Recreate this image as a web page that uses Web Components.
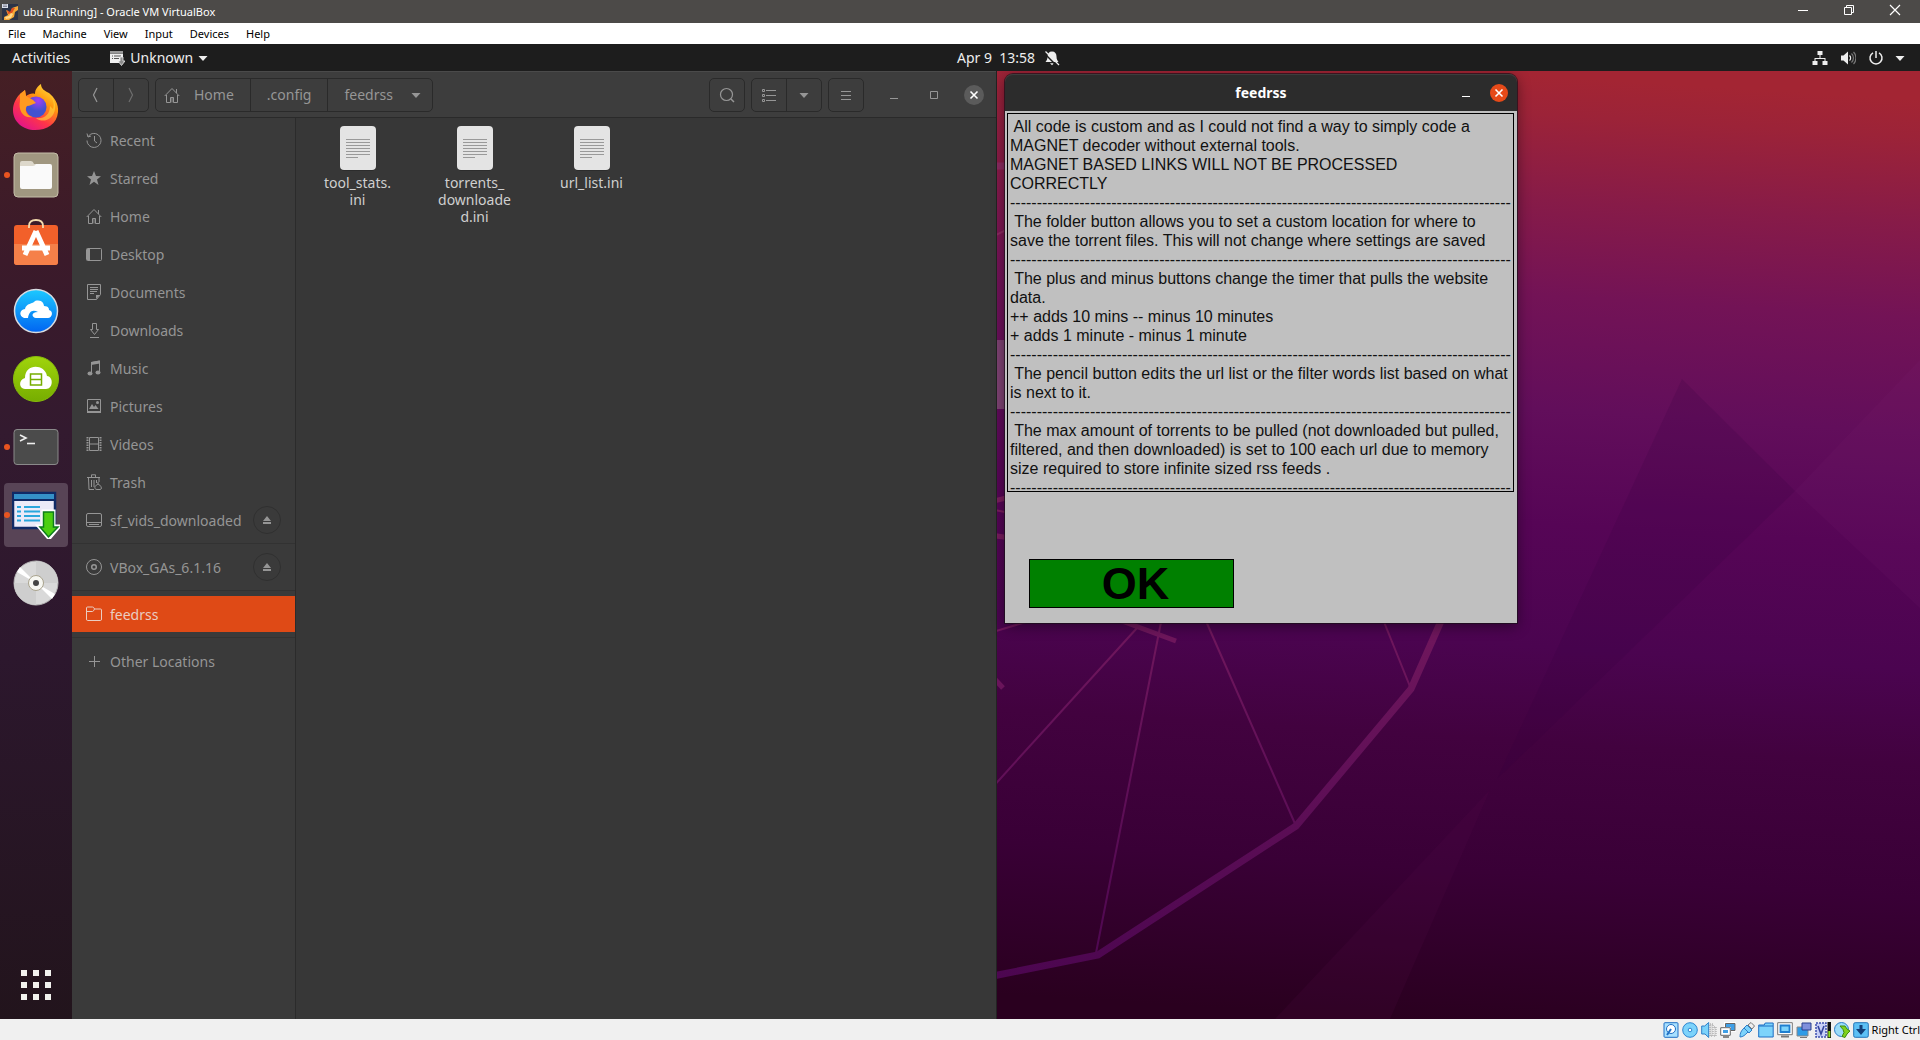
<!DOCTYPE html>
<html lang="en">
<head>
<meta charset="utf-8">
<title>ubu [Running] - Oracle VM VirtualBox</title>
<style>
html, body { height: 100%; margin: 0; }
body { display: flex; flex-direction: column; overflow: hidden; background: #1d1d1d; font-family: "Noto Sans", sans-serif; font-size: 14px; }
main { flex: 1; min-height: 0; display: flex; }
</style>
</head>
<body>
<vm-titlebar>ubu [Running] - Oracle VM VirtualBox</vm-titlebar>
<vm-menubar></vm-menubar>
<shell-panel></shell-panel>
<main>
  <shell-dock></shell-dock>
  <desk-top>
    <files-window></files-window>
    <dialog-window heading="feedrss"><feed-help></feed-help></dialog-window>
  </desk-top>
</main>
<vm-statusbar></vm-statusbar>

<script>
const ICONS = {
  vbox: '<rect width="16" height="16" fill="#2b3448"/><path d="M4 6l5 3 1-5 6-2v4l-3 2-1 5-5 3H2v-3l4-2z" fill="#f5a836"/><path d="M5 6l3 2 2-4h3l-3 5-4 1z" fill="#e3501f"/><path d="M3 13l4-1 2-3 2 1-2 4-5 1z" fill="#ffd98a"/><rect width="6" height="4" fill="#d9dee8"/><path d="M1 1h4M1 2.500h4" stroke="#667" stroke-width=".7"/>',
  winmin: '<path d="M3 8.500h10" stroke="#fff"/>',
  winmax: '<path d="M3.500 5.500h7v7h-7zM5.500 5.500v-2h7v7h-2" fill="none" stroke="#fff"/>',
  winclose: '<path d="M3 3l10 10M13 3L3 13" stroke="#fff" stroke-width="1.200"/>',
  app: '<path d="M1 1h13v2H1z" fill="#999"/><path d="M1 3.500h13V8h-1.500v3H10v2H1z" fill="#eee"/><path d="M3 6h1m1 0h7M3 8.500h1m1 0h5" stroke="#555"/><path d="M11 7h3v4h2l-3.500 4.500L9 11h2z" fill="#8a8a8a" stroke="#eee" stroke-width=".8"/>',
  down: '<path d="M3.500 6h9L8 11z" fill="currentColor"/>',
  bell: '<path d="M8 1.500c3 0 4.500 2 4.500 5 0 3 1 4 2 5.500H1.500c1-1.500 2-2.500 2-5.500 0-3 1.500-5 4.500-5zM6 13.300h4L8 15.300z" fill="#eee"/><path d="M0 3l13 13" stroke="#1d1d1d" stroke-width="1.500"/><path d="M1.500 1.500l13.500 13.500" stroke="#eee" stroke-width="1.200"/>',
  net: '<path d="M5.500 1h5v4h-2v3h5v3h2v4h-5v-4h2V9h-9v2h2v4h-5v-4h2V8h5V5h-2z" fill="#eee"/>',
  vol: '<path d="M1 5.500h2.500L8 1.500v13l-4.500-4H1z" fill="#eee"/><path d="M9.500 5.500c1.500 1.300 1.500 3.700 0 5" fill="none" stroke="#eee" stroke-width="1.200"/><path d="M11.500 3.500c2.600 2.500 2.600 6.500 0 9M13.500 2c3.200 3 3.200 9 0 12" fill="none" stroke="#777" stroke-width="1.200"/>',
  power: '<path d="M5 2.800a6 6 0 1 0 6 0M8 1v7" fill="none" stroke="#eee" stroke-width="1.500"/>',
  back: '<path d="M9 1L5.500 8 9 15" fill="none" stroke="currentColor" stroke-width="1.200"/>',
  fwd: '<path d="M6 1l3.500 7L6 15" fill="none" stroke="currentColor" stroke-width="1.200"/>',
  home: '<path d="M.7 9L8 1.500 15.300 9M2.500 8v7.500h4v-5h3v5h4V8M12.500 2v4" fill="none" stroke="currentColor"/><path d="M7 10h2.500v5.500H7z" fill="currentColor" opacity=".45"/>',
  recent: '<path d="M2.200 4.500A7 7 0 1 1 1 8.500M8.500 4v5l2.500 2M1 1.500l1 3.500 3-1" fill="none" stroke="currentColor"/>',
  star: '<path d="M8 1l2 5 5 .2-4 3.400L12.500 15 8 11.800 3.500 15 5 9.600 1 6.200 6 6z" fill="currentColor"/>',
  desktop: '<rect x=".5" y="2.500" width="15" height="12" rx="1" fill="none" stroke="currentColor"/><path d="M1 3h3v11H1z" fill="currentColor"/>',
  doc: '<path d="M1.500.5h13v10l-4 5h-9zM4 3.500h8M4 5.500h8M4 7.500h7M4 9.500h4" fill="none" stroke="currentColor"/><path d="M10 11h4l-4 4z" fill="currentColor"/>',
  download: '<path d="M6.500 1.500h4v6h2l-4 5-4-5h2zM4 15.500h9" fill="none" stroke="currentColor"/>',
  music: '<path d="M5.500 13V2.500l8-1.500v11" fill="none" stroke="currentColor"/><path d="M5 2l9-1.500v3L5 5z" fill="currentColor"/><ellipse cx="4" cy="13.500" rx="2.500" ry="2" fill="currentColor"/><ellipse cx="12" cy="12.500" rx="2.500" ry="2" fill="currentColor"/>',
  picture: '<path d="M1.500 1.500h13v13h-13z" fill="none" stroke="currentColor"/><path d="M1 13h14v2H1zM3 11l3-5 2 3 1.500-2 3 4z" fill="currentColor"/><circle cx="11.500" cy="4.500" r="1.500" fill="currentColor"/>',
  video: '<path d="M3.500 1.500h9v13h-9zM3.500 8h9" fill="none" stroke="currentColor"/><path d="M1.500 1v14M14.500 1v14" stroke="currentColor" stroke-width="2" stroke-dasharray="1.500 1"/>',
  trash: '<path d="M1 3.500h13M5.500 3V.8h4V3M2.500 4l.5 11.500h5M5.500 6v7M8 6v7M10.500 6v3M13 4v4" fill="none" stroke="currentColor"/><path d="M12 8v2m0 0c-4 2-4 5.500-1 5.500h3c2.500 0 1.500-4-2-5.500z" fill="none" stroke="currentColor"/>',
  drive: '<rect x=".5" y="1.500" width="15" height="13" rx="1.500" fill="none" stroke="currentColor"/><path d="M1 10.500h14M3 12.500h10" stroke="currentColor"/>',
  disc: '<circle cx="8" cy="8" r="7.500" fill="none" stroke="currentColor"/><circle cx="8" cy="8" r="2.300" fill="none" stroke="currentColor" stroke-width="1.500"/>',
  folder: '<path d="M.5 13V2q0-1 1-1h5q1 0 1.500 1l.5 1h6q1 0 1 1v9q0 1.500-1 1.500h-13q-1 0-1-1.500zM.5 5.500h6q1 0 2-2.500" fill="none" stroke="currentColor"/>',
  plus: '<path d="M8.500 3v11M3 8.500h11" stroke="currentColor"/>',
  eject: '<path d="M8 4l4 5H4zM4 10h8v2H4z" fill="currentColor"/>',
  search: '<circle cx="7.500" cy="7.500" r="6" fill="none" stroke="currentColor" stroke-width="1.200"/><path d="M12 12l3 3" stroke="currentColor" stroke-width="1.500"/>',
  list: '<path d="M5 3.500h10M5 8.500h10M5 13.500h10" stroke="currentColor"/><path d="M1.500 2.500h2v2h-2zM1.500 7.500h2v2h-2zM1.500 12.500h2v2h-2z" fill="none" stroke="currentColor"/>',
  burger: '<path d="M3 4.500h10M3 8.500h10M3 12.500h10" stroke="currentColor"/>',
  min: '<path d="M4 11.500h8" stroke="currentColor"/>',
  max: '<path d="M4.500 4.500h7v7h-7z" fill="none" stroke="currentColor"/>',
  close: '<path d="M4.500 4.500l7 7M11.500 4.500l-7 7" stroke="currentColor" stroke-width="1.600"/>',
  hdd: '<rect x="1" y=".7" width="14" height="14.600" rx="1" fill="#a8e0ff" stroke="#1f6fc4"/><circle cx="8" cy="7" r="4.500" fill="#fff" stroke="#1f6fc4"/><path d="M8 7l-4 6" stroke="#1f6fc4" stroke-width="2"/>',
  cd: '<circle cx="8" cy="8" r="7.300" fill="#7cd3fb" stroke="#2d86d0"/><circle cx="8" cy="8" r="1.800" fill="#fff" stroke="#2d86d0"/>',
  audio: '<path d="M.7 4h3l4-3.500v15L4 12H.7z" fill="#7cd3fb" stroke="#2d7ec8"/><path d="M9 2h3v12H9zM13 5h2v9h-2" fill="#ddd" stroke="#999" stroke-dasharray="1 1"/>',
  lan: '<path d="M5.500 1.500h9.500v7H5.500z" fill="#3f9fe6" stroke="#fff" stroke-width="3"/><path d="M5.500 1.500h9.500v7H5.500z" fill="#3f9fe6" stroke="#666"/><path d="M1.500 6.500h8v6h-8z" fill="#3f9fe6" stroke="#fff" stroke-width="3"/><path d="M.7 5.700h9.600v7.600H.7z" fill="none" stroke="#666"/><path d="M3 15h6" stroke="#666" stroke-width="1.500"/>',
  usb: '<path d="M1 15c0-4 1-6 4-9l4 4c-3 3-5 5-8 5z" fill="#7cd3fb" stroke="#2d7ec8"/><path d="M5 6l3-3 5 5-3 3z" fill="#7cd3fb" stroke="#2d7ec8"/><path d="M9 3l3-2.500 3.500 3.500L13 7z" fill="#eee" stroke="#777"/>',
  share: '<path d="M.7 3h5.500l1-2h8v14H.7z" fill="#7cd3fb" stroke="#1f6fc4"/><path d="M1 4h14" stroke="#1f6fc4"/>',
  display: '<path d="M.7.7h14.600v12H.7z" fill="#fff" stroke="#777"/><path d="M3.500 3.500h9v6.500h-9z" fill="#7cd3fb" stroke="#1f7fd0" stroke-width="1.800"/><path d="M4 14.500h8" stroke="#777" stroke-width="2"/>',
  rec: '<path d="M1 5h11v9H1z" fill="#2d9be6" stroke="#888"/><path d="M6 1h9v7H6z" fill="#7f90dc" stroke="#2a418f"/><path d="M4 15.500h7" stroke="#777"/>',
  cpu: '<rect x="1" y="1" width="10" height="14" fill="#c8d0f6" stroke="#3e4fae" stroke-width="1.500" stroke-dasharray="2 1"/><path d="M3 4l3 8 3-8" fill="none" stroke="#33449c" stroke-width="1.600"/><path d="M12.500 0h3.500v16h-3.500z" fill="#111"/><path d="M13.300 9h2v6.300h-2z" fill="#8be01c"/>',
  mouse: '<circle cx="7.500" cy="7.500" r="7" fill="#9adcf8" stroke="#2d7ec8"/><path d="M6 4h5l2 3 3 2-3 3-2 3.500-3-1 2-4-1-3z" fill="#7fd11c" stroke="#3c8a10"/>',
  key: '<rect x=".7" y=".7" width="14.600" height="14.600" rx="1.500" fill="#5cc0f5" stroke="#2274b8"/><path d="M6.500 3h3v4H13l-5 6-5-6h3.500z" fill="#123f78"/>',
  textfile: '<rect x="0" y=".5" width="36" height="44" rx="4" fill="#222"/><rect width="36" height="44" rx="4" fill="#e4e4e4"/><path d="M6 13.500h24M6 16.500h24M6 19.500h24M6 22.500h24M6 25.500h24M6 28.500h24M6 31.500h12" stroke="#999"/>'
};

const DOCK = {
  firefox: '<defs><linearGradient id="a" x1="1" y1="0" x2=".3" y2="1"><stop offset="0" stop-color="#fff44f"/><stop offset=".4" stop-color="#ff980e"/><stop offset=".7" stop-color="#ff3647"/><stop offset="1" stop-color="#e31587"/></linearGradient><radialGradient id="b" cx=".6" cy=".2"><stop offset="0" stop-color="#a63df5"/><stop offset="1" stop-color="#4152cf"/></radialGradient></defs><path d="M8 11l5-4 1 6c3-2 6-3 9-2 0-5 3-8 6-10 0 5 4 7 8 9c5 4 10 11 9 19-1 12-11 18-23 18S1 39 1 27c0-6 3-12 7-16z" fill="url(#a)"/><path d="M29 1c0 5 4 7 8 10 4 4 6 10 4 15l-3-3c0 9-6 13-14 12 7 6 18 1 19-9 1-6-2-12-6-15-4-3-8-5-8-10z" fill="#ffd43a" opacity=".65"/><circle cx="24" cy="24" r="10.500" fill="url(#b)"/><path d="M8 11l5-4 1 6 7 4 3 3c-4 1-6 3-9 3-3 4 0 10 6 11-10 2-15-7-13-16z" fill="#ff9a1f"/>',
  files: '<rect x="2" y="2" width="44" height="44" rx="4" fill="#a09780" stroke="#c4bda8"/><path d="M8 12q0-2 2-2h9q2 0 3 3h13v5H8z" fill="#ddd8cb"/><path d="M8 15h13q2 0 3-2h14q2 0 2 2v21q0 2-2 2H10q-2 0-2-2z" fill="#fafafa"/>',
  store: '<rect x="2" y="6" width="44" height="40" rx="3" fill="#f2602a"/><path d="M2 25h44v18q0 3-3 3H5q-3 0-3-3z" fill="#f58049"/><path d="M17 9V7q0-6 7-6t7 6v2" fill="none" stroke="#f5dcae" stroke-width="1.800"/><path d="M24 12L13 36M24 12l11 24M10 29h28" stroke="#fff" stroke-width="5"/>',
  cloud: '<defs><linearGradient id="c" x2="0" y2="1"><stop stop-color="#1dc9ff"/><stop offset="1" stop-color="#0065f2"/></linearGradient></defs><circle cx="24" cy="24" r="21.500" fill="url(#c)" stroke="#d7dbe1" stroke-width="1.500"/><path d="M12 31c-5-2-5-8 1-9 1-6 8-5 10-8 7-2 9 3 9 5 5 0 5 3 5 4 5 1 3 8-1 8H24c-4 0-6-6 2-6-6-3-9 0-10 6z" fill="#fff"/>',
  green: '<defs><linearGradient id="d" x2="0" y2="1"><stop stop-color="#a0d40c"/><stop offset="1" stop-color="#76ad00"/></linearGradient></defs><circle cx="24" cy="24" r="22.500" fill="url(#d)" stroke="#87bd0a"/><path d="M13 34c-6 0-7-9 0-11 0-15 20-14 22-2 7 1 6 13-1 13z" fill="#fff"/><path d="M18.500 19v11h11V19zM18 24.500h12" fill="none" stroke="#76ad00" stroke-width="1.500"/>',
  term: '<rect x="2" y="6.500" width="44" height="35" rx="3" fill="#4b4b4b" stroke="#8a8a8a"/><path d="M8 12l6 3-6 3" fill="none" stroke="#eee" stroke-width="1.600"/><path d="M15 20.500h8" stroke="#eee" stroke-width="1.600"/>',
  feed: '<rect x="1" y="2" width="42" height="35" fill="#ebeaf8" stroke="#102a66" stroke-width="2.500"/><path d="M2 3h40v6H2z" fill="#3591c8"/><path d="M2 9h40" stroke="#102a66" stroke-width="2"/><path d="M5 16h4m3 0h16M5 20.500h4m3 0h16M5 25h4m3 0h16M5 29.500h4m3 0h16" stroke="#29a6dc" stroke-width="2"/><path d="M31 20h11v15h6L37 48 26 35h5z" fill="#4ed40d" stroke="#fff" stroke-width="3"/><path d="M31.500 21h10v15h4.500L36.500 46 28 36h3.500z" fill="#4ccf10" stroke="#0c7d1b" stroke-width="1.500"/>',
  cdrom: '<circle cx="24" cy="24" r="22" fill="#d9d9d9" stroke="#b5b5b5"/><path d="M24 24L24 2A22 22 0 0 1 46 24z" fill="#cecece"/><path d="M24 24L2 24A22 22 0 0 0 24 46z" fill="#cecece"/><path d="M24 24L5 13l3-5zM24 24l19 11-3 5z" fill="#fff"/><circle cx="24" cy="24" r="7.500" fill="#f7f7f2" stroke="#a9a38d"/><circle cx="24" cy="24" r="3" fill="#444"/>',
  grid: '<path d="M9 9h6v6H9zM21 9h6v6h-6zM33 9h6v6h-6zM9 21h6v6H9zM21 21h6v6h-6zM33 21h6v6h-6zM9 33h6v6H9zM21 33h6v6h-6zM33 33h6v6h-6z" fill="#f2f2ee"/>'
};

const define = (name, html) => customElements.define(name, class extends HTMLElement {
  connectedCallback() {
    if (this.shadowRoot) return;
    const root = this.attachShadow({ mode: 'open' });
    root.innerHTML = typeof html === 'function' ? html(this) : html;
  }
});
const RESET = 'button{font:inherit;color:inherit;background:none;border:0;padding:0;margin:0;display:flex;align-items:center;justify-content:center}';

define('sys-icon', el => {
  const w = el.getAttribute('w') || 16, h = el.getAttribute('h') || w;
  return `<style>:host{display:block;flex:none;width:${w}px;height:${h}px}svg{display:block}</style><svg width="${w}" height="${h}" viewBox="0 0 ${el.hasAttribute('h') ? w + ' ' + h : '16 16'}" aria-hidden="true">${ICONS[el.getAttribute('name')]}</svg>`;
});

define('vm-titlebar', `<style>${RESET}
:host{display:flex;align-items:center;height:23px;background:#4c4a48;color:#fff;font:11px "Noto Sans",sans-serif;padding:0 2px}
.t{flex:1;padding-left:5px}
button{width:46px;height:20px;align-self:flex-start}
</style><sys-icon name="vbox"></sys-icon><span class="t"><slot></slot></span>
<button aria-label="Minimize"><sys-icon name="winmin"></sys-icon></button><button aria-label="Restore"><sys-icon name="winmax"></sys-icon></button><button aria-label="Close"><sys-icon name="winclose"></sys-icon></button>`);

define('vm-menubar', `<style>${RESET}
:host{display:block;background:#fff;color:#000;font:11px "Noto Sans",sans-serif}
nav{display:flex;align-items:center;gap:17px;height:21px;padding-left:8px}
</style><nav>${['File', 'Machine', 'View', 'Input', 'Devices', 'Help'].map(t => `<button>${t}</button>`).join('')}</nav>`);

define('shell-panel', `<style>${RESET}
:host{display:flex;align-items:center;height:27px;background:#1d1d1d;color:#eee;font-size:14px}
.left{width:calc(50% - 3px);display:flex;align-items:center;padding-left:12px;box-sizing:border-box}
.app{margin-left:39px;gap:5px}.clock{gap:9px}.clock span{white-space:pre}
.right{margin-left:auto;padding-right:12px;gap:12px}
.right sys-icon:last-child{margin-left:-4px}
.app sys-icon:last-child{margin-left:-3px}
</style><div class="left"><button>Activities</button><button class="app"><sys-icon name="app"></sys-icon>Unknown<sys-icon name="down"></sys-icon></button></div>
<button class="clock"><span>Apr 9  13:58</span><sys-icon name="bell"></sys-icon></button>
<button class="right" aria-label="System menu"><sys-icon name="net"></sys-icon><sys-icon name="vol"></sys-icon><sys-icon name="power"></sys-icon><sys-icon name="down"></sys-icon></button>`);

define('dock-item', el => `<style>${RESET}
:host{display:block;width:72px}
button{position:relative;width:64px;height:64px;margin:0 4px;border-radius:4px}
:host([active]) button{background:#584456}
:host([running]) button::before{content:"";position:absolute;left:0;top:29px;width:6px;height:6px;border-radius:3px;background:#e95420}
</style><button aria-label="${el.getAttribute('label')}"><svg width="48" height="48" viewBox="0 0 48 48">${DOCK[el.getAttribute('icon')]}</svg></button>`);

define('shell-dock', `<style>
:host{display:block;width:72px;flex:none;background:linear-gradient(#451f24,#3b1a2a 20%,#331a2f 38%,#2c172d 62%,#22141c)}
nav{display:flex;flex-direction:column;gap:4px;height:100%;box-sizing:border-box;padding:4px 0 2px}
.apps{margin-top:auto}
</style><nav>
<dock-item icon="firefox" label="Firefox"></dock-item><dock-item icon="files" label="Files" running></dock-item>
<dock-item icon="store" label="Ubuntu Software"></dock-item><dock-item icon="cloud" label="Cloud"></dock-item>
<dock-item icon="green" label="Video downloader"></dock-item><dock-item icon="term" label="Terminal" running></dock-item>
<dock-item icon="feed" label="feedrss" running active></dock-item><dock-item icon="cdrom" label="Disc"></dock-item>
<dock-item class="apps" icon="grid" label="Show Applications"></dock-item></nav>`);

define('desk-top', `<style>
:host{display:block;position:relative;flex:1;min-width:0;overflow:hidden}
.wall{position:absolute;left:50%;top:0;width:50%;height:100%}
</style>
<svg class="wall" viewBox="996 71 924 948" preserveAspectRatio="none" aria-hidden="true">
<defs><linearGradient id="g" x1=".5" y1="0" x2=".44" y2="1"><stop stop-color="#a32533"/><stop offset=".04" stop-color="#9c2338"/><stop offset=".13" stop-color="#871b48"/><stop offset=".23" stop-color="#731356"/><stop offset=".35" stop-color="#620e5b"/><stop offset=".47" stop-color="#560556"/><stop offset=".6" stop-color="#4b0450"/><stop offset=".7" stop-color="#42023f"/><stop offset=".84" stop-color="#390036"/><stop offset="1" stop-color="#2a001f"/></linearGradient>
<linearGradient id="s" gradientUnits="userSpaceOnUse" x1="0" y1="300" x2="0" y2="980"><stop stop-color="#8a2a60"/><stop offset=".5" stop-color="#6e165c"/><stop offset="1" stop-color="#4c0650"/></linearGradient></defs>
<path fill="url(#g)" d="M996 71h924v948H996z"/>
<path d="M1682 379l113 112-298 288z" fill="#30003c" opacity=".16"/>
<path d="M1795 491l125-131v248z" fill="#8a3080" opacity=".08"/>
<path d="M1490 790l-215 229h115z" fill="#5a1050" opacity=".14"/>
<path d="M996 340h20v69h-20z" fill="#7d4272"/>
<g fill="none" stroke="url(#s)"><path stroke-width="7" d="M1445 612l-34 77-115 137-198 129-110 22M990 166h20"/>
<path stroke-width="5" d="M1122 621l54 20M990 674l13 14M990 502l20-5M990 535l20 3"/>
<path stroke-width="2" d="M1137 628L990 790M1163 612l-67 341M1202 612l94 214M1380 612l31 77M996 631l40-12M990 238l20-10M990 509l20 4"/></g>
</svg><slot></slot>`);

define('place-row', el => `<style>${RESET}
:host{display:block;color:#959595}
:host([selected]){color:#eacdc2}
.row{display:flex;align-items:center;height:36px;padding:0 14px;border:solid transparent;border-width:1px 0}
:host([selected]) .row{background:#df4a16 padding-box}
a{flex:1;display:flex;align-items:center;gap:8px;color:inherit;text-decoration:none;white-space:nowrap}
button{width:28px;height:28px;box-sizing:border-box;border:1px solid #303030;border-radius:50%}
</style><div class="row"><a href="#"><sys-icon name="${el.getAttribute('icon')}"></sys-icon><slot></slot></a>${el.hasAttribute('eject') ? '<button aria-label="Eject"><sys-icon name="eject"></sys-icon></button>' : ''}</div>`);

define('file-item', `<style>
:host{display:flex;flex-direction:column;align-items:center;width:117px;color:#cfcfcf;text-align:center;line-height:17px;gap:3px}
span{white-space:pre}
</style><sys-icon name="textfile" w="36" h="45"></sys-icon><span><slot></slot></span>`);

define('files-window', `<style>${RESET}
:host{position:absolute;left:0;top:0;width:calc(50% + 1px);height:100%;display:flex;flex-direction:column;background:#373737;color:#969696;box-sizing:border-box;border-right:1px solid #232323}
header{display:flex;align-items:center;gap:6px;height:47px;padding:0 12px 0 6px;box-sizing:border-box;background:#3d3d3d;border-top:1px solid #4a4a4a;border-bottom:1px solid #2a2a2a}
.g{display:flex;height:34px;box-sizing:border-box;border:1px solid #2a2a2a;border-radius:5px}
.g button{width:34px;box-sizing:border-box}.g button+button{width:35px;border-left:1px solid #2a2a2a}
.g.path button{width:auto;padding:0 16px}
.g.path button:first-child{padding:0 16px 0 8px;gap:14px}.g.path button:last-child{padding:0 8px 0 16px;gap:15px}
.sp{flex:1}
.wb{width:34px;height:20px}
.close{width:20px;border-radius:50%;background:#5b5b5b;color:#fff}
.wbs{display:flex;gap:6px;padding-left:7px}.wbs .close{margin-left:7px}
.body{flex:1;display:flex;min-height:0}
nav{width:224px;box-sizing:border-box;flex:none;background:#3a3a3a;border-right:1px solid #2b2b2b;padding-top:3px}
hr{border:0;height:1px;background:#323232;margin:4px 0}
.dim{color:#6e6e6e}
.files{flex:1;display:flex;align-items:flex-start;padding:8px 3px}
</style>
<header><div class="g"><button aria-label="Back"><sys-icon name="back"></sys-icon></button><button class="dim" aria-label="Forward"><sys-icon name="fwd"></sys-icon></button></div>
<div class="g path"><button><sys-icon name="home"></sys-icon>Home</button><button>.config</button><button>feedrss<sys-icon name="down"></sys-icon></button></div>
<span class="sp"></span>
<div class="g"><button aria-label="Search"><sys-icon name="search"></sys-icon></button></div>
<div class="g"><button aria-label="List view"><sys-icon name="list"></sys-icon></button><button aria-label="View options"><sys-icon name="down"></sys-icon></button></div>
<div class="g"><button aria-label="Menu"><sys-icon name="burger"></sys-icon></button></div>
<div class="wbs"><button class="wb" aria-label="Minimize"><sys-icon name="min"></sys-icon></button><button class="wb" aria-label="Maximize"><sys-icon name="max"></sys-icon></button><button class="wb close" aria-label="Close"><sys-icon name="close"></sys-icon></button></div>
</header>
<div class="body"><nav>
<place-row icon="recent">Recent</place-row><place-row icon="star">Starred</place-row><place-row icon="home">Home</place-row><place-row icon="desktop">Desktop</place-row><place-row icon="doc">Documents</place-row><place-row icon="download">Downloads</place-row><place-row icon="music">Music</place-row><place-row icon="picture">Pictures</place-row><place-row icon="video">Videos</place-row><place-row icon="trash">Trash</place-row><place-row icon="drive" eject>sf_vids_downloaded</place-row><hr>
<place-row icon="disc" eject>VBox_GAs_6.1.16</place-row><hr><place-row icon="folder" selected>feedrss</place-row><hr><place-row icon="plus">Other Locations</place-row>
</nav><div class="files"><file-item>tool_stats.
ini</file-item><file-item>torrents_
downloade
d.ini</file-item><file-item>url_list.ini</file-item></div></div>`);

define('dialog-window', el => `<style>${RESET}
:host{position:absolute;left:933px;top:3px;width:512px;border-radius:8px 8px 0 0;box-shadow:0 0 0 1px rgba(25,15,25,.7),0 3px 14px rgba(0,0,0,.45)}
header{display:grid;grid-template-columns:1fr auto 1fr;align-items:center;height:37px;background:#2c2c2c;border-radius:8px 8px 0 0;color:#fff;box-shadow:inset 0 1px #3d3d3d}
h1{font-size:14px;margin:0}
.b{display:flex;justify-content:flex-end;gap:16px;padding-right:9px}
.x{width:18px;height:18px;border-radius:50%;background:#e64a19}
</style><header><span></span><h1>${el.getAttribute('heading')}</h1><div class="b"><button aria-label="Minimize"><sys-icon name="min"></sys-icon></button><button class="x" aria-label="Close"><sys-icon name="close"></sys-icon></button></div></header><slot></slot>`);

const RULE = '-'.repeat(94);
define('feed-help', `<style>
:host{display:block;background:#c0c0c0;padding:2px 3px 15px 2px;color:#111;font:16px/19px "Liberation Sans",sans-serif}
.text{box-sizing:border-box;height:379px;border:1px solid #000;padding:3px 2px;white-space:pre}
button{display:block;width:205px;height:49px;margin:67px 0 0 22px;padding:0 0 0 8px;background:#008000;border:1px solid #000;border-radius:0;font:bold 45px/45px "Liberation Sans",sans-serif;color:#000}
</style><div class="text"> All code is custom and as I could not find a way to simply code a
MAGNET decoder without external tools.
MAGNET BASED LINKS WILL NOT BE PROCESSED
CORRECTLY
${RULE}
 The folder button allows you to set a custom location for where to
save the torrent files. This will not change where settings are saved
${RULE}
 The plus and minus buttons change the timer that pulls the website
data.
++ adds 10 mins -- minus 10 minutes
+ adds 1 minute - minus 1 minute
${RULE}
 The pencil button edits the url list or the filter words list based on what
is next to it.
${RULE}
 The max amount of torrents to be pulled (not downloaded but pulled,
filtered, and then downloaded) is set to 100 each url due to memory
size required to store infinite sized rss feeds .
${RULE}</div><button>OK</button>`);

define('vm-statusbar', `<style>
:host{display:flex;align-items:center;justify-content:flex-end;gap:3px;height:21px;background:#f0f0f0;color:#000;font:11px "Noto Sans",sans-serif}
span{white-space:nowrap}
</style>${['hdd', 'cd', 'audio', 'lan', 'usb', 'share', 'display', 'rec', 'cpu', 'mouse', 'key'].map(n => `<sys-icon name="${n}"></sys-icon>`).join('')}<span>Right Ctrl</span>`);
</script>
</body>
</html>
